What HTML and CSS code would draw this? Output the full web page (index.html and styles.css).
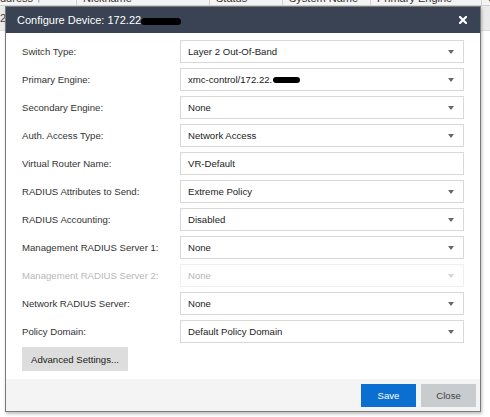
FILE: index.html
```html
<!DOCTYPE html>
<html>
<head>
<meta charset="utf-8">
<link rel="stylesheet" href="styles.css">
</head>
<body>
<div class="bg">
  <div class="bg-head">
    <div class="hc c1"><span>ddress ↑</span></div>
    <div class="hc c2"><span>Nickname</span></div>
    <div class="hc c3"><span>Status</span></div>
    <div class="hc c4"><span>System Name</span></div>
    <div class="hc c5"><span>Primary Engine</span></div>
    <div class="hc c6"><span>C</span></div>
  </div>
  <div class="bg-row"><span class="bg-cell">2</span></div>
</div>

<div class="dialog">
  <div class="titlebar">
    <span class="title">Configure Device: 172.22<span class="redact r1"></span></span>
    <svg class="close" width="8" height="8" viewBox="0 0 8 8"><path d="M1 1L7 7M7 1L1 7" stroke="#fff" stroke-width="2.2" stroke-linecap="square"/></svg>
  </div>
  <div class="body">
    <div class="row"><span class="lbl">Switch Type:</span><div class="box sel">Layer 2 Out-Of-Band</div></div>
    <div class="row"><span class="lbl">Primary Engine:</span><div class="box sel">xmc-control/172.22.<span class="redact r2"></span></div></div>
    <div class="row"><span class="lbl">Secondary Engine:</span><div class="box sel">None</div></div>
    <div class="row"><span class="lbl">Auth. Access Type:</span><div class="box sel">Network Access</div></div>
    <div class="row"><span class="lbl">Virtual Router Name:</span><div class="box">VR-Default</div></div>
    <div class="row"><span class="lbl">RADIUS Attributes to Send:</span><div class="box sel">Extreme Policy</div></div>
    <div class="row"><span class="lbl">RADIUS Accounting:</span><div class="box sel">Disabled</div></div>
    <div class="row"><span class="lbl">Management RADIUS Server 1:</span><div class="box sel">None</div></div>
    <div class="row disabled"><span class="lbl">Management RADIUS Server 2:</span><div class="box sel">None</div></div>
    <div class="row"><span class="lbl">Network RADIUS Server:</span><div class="box sel">None</div></div>
    <div class="row"><span class="lbl">Policy Domain:</span><div class="box sel">Default Policy Domain</div></div>
    <div class="adv-wrap"><button class="btn adv">Advanced Settings...</button></div>
  </div>
  <div class="footer">
    <button class="btn save">Save</button>
    <button class="btn closebtn">Close</button>
  </div>
</div>
</body>
</html>
```

FILE: styles.css
```css
html, body {
  margin: 0;
  padding: 0;
  background: #ffffff;
  font-family: "Liberation Sans", Arial, sans-serif;
}

.bg {
  width: 490px;
  height: 417px;
  overflow: hidden;
}

.bg-head {
  display: flex;
  height: 5px;
  overflow: hidden;
  background: #f4f4f4;
  border-bottom: 1px solid #cfcfcf;
}

.hc {
  box-sizing: border-box;
  border-right: 1px solid #cfcfcf;
  padding-left: 6px;
  font-size: 11px;
  color: #333;
  line-height: 6px;
  white-space: nowrap;
  overflow: hidden;
}

.hc span {
  display: block;
  margin-top: -5px;
}

.c1 { width: 77px; padding-left: 0; }
.c2 { width: 133px; }
.c3 { width: 73px; }
.c4 { width: 88px; }
.c5 { width: 111px; }
.c6 { flex: 1; border-right: none; }

.bg-row {
  height: 24px;
  background: #eaeaea;
  border-bottom: 1px solid #dcdcdc;
  font-size: 11px;
  color: #444;
  line-height: 24px;
}

.bg-cell {
  padding-left: 0;
}

.dialog {
  position: absolute;
  left: 5px;
  top: 6px;
  width: 474px;
  border: 1px solid #7a7a7a;
  background: #ffffff;
  box-shadow: 1px 2px 3px rgba(0, 0, 0, 0.25);
}

.titlebar {
  height: 26px;
  background: #394353;
  display: flex;
  align-items: center;
  justify-content: space-between;
  padding: 0 13px 0 11px;
}

.title {
  color: #ffffff;
  font-size: 11px;
  display: flex;
  align-items: center;
}

.redact {
  display: inline-block;
  background: #000;
  border-radius: 4px;
}

.r1 {
  width: 40px;
  height: 7px;
  margin-top: 2px;
}

.r2 {
  width: 27px;
  height: 6px;
  margin-left: 1px;
  border-radius: 3px;
}

.close {
  display: block;
}

.body {
  padding: 7px 16px 8px 16px;
  display: flex;
  flex-direction: column;
  gap: 5px;
}

.row {
  display: flex;
  align-items: center;
  font-size: 9.6px;
}

.lbl {
  width: 158px;
  color: #333;
}

.box {
  box-sizing: border-box;
  width: 284px;
  height: 23px;
  border: 1px solid #d8d8d8;
  padding: 0 9px 0 7px;
  display: flex;
  align-items: center;
  color: #222;
}

.sel {
  position: relative;
}

.sel::after {
  content: "";
  margin-left: auto;
  width: 0;
  height: 0;
  border-left: 3.5px solid transparent;
  border-right: 3.5px solid transparent;
  border-top: 4px solid #666;
}

.disabled .lbl { color: #b8b8b8; }
.disabled .box { color: #b8b8b8; border-color: #efefef; }
.disabled .sel::after { border-top-color: #d4d4d4; }

.adv-wrap {
  margin-top: -1px;
  display: flex;
}

.btn {
  font-family: "Liberation Sans", Arial, sans-serif;
  font-size: 9.6px;
  border: none;
  margin: 0;
  cursor: pointer;
}

.adv {
  width: 106px;
  height: 24px;
  background: #dddddd;
  color: #222;
  padding: 0;
}

.footer {
  height: 32px;
  box-sizing: border-box;
  background: #f4f4f4;
  display: flex;
  justify-content: flex-end;
  align-items: flex-start;
  gap: 5px;
  padding: 5px 4px 4px 0;
}

.save {
  width: 55px;
  height: 23px;
  background: #0b6fd1;
  color: #ffffff;
}

.closebtn {
  width: 55px;
  height: 23px;
  background: #c9cccf;
  color: #444;
}
```
